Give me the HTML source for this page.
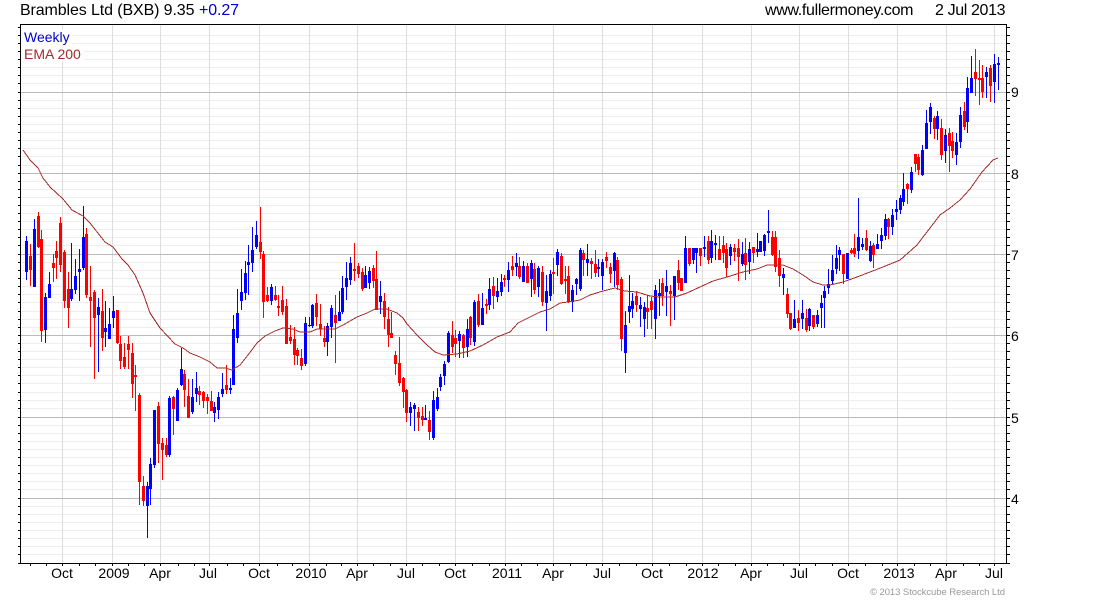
<!DOCTYPE html>
<html><head><meta charset="utf-8"><title>Brambles Ltd (BXB)</title>
<style>
html,body{margin:0;padding:0;background:#fff;width:1100px;height:600px;overflow:hidden}
svg{display:block}
text{font-family:"Liberation Sans",Arial,sans-serif;font-size:14px;fill:#000}
</style></head><body>
<svg width="1100" height="600" viewBox="0 0 1100 600" xmlns="http://www.w3.org/2000/svg">
<rect width="1100" height="600" fill="#fff"/>
<g shape-rendering="crispEdges" fill="none">
<path stroke="#eeeeee" d="M21 35.5H1006M21 43.5H1006M21 51.5H1006M21 59.5H1006M21 67.5H1006M21 75.5H1006M21 83.5H1006M21 100.5H1006M21 108.5H1006M21 116.5H1006M21 124.5H1006M21 132.5H1006M21 140.5H1006M21 148.5H1006M21 156.5H1006M21 165.5H1006M21 181.5H1006M21 189.5H1006M21 197.5H1006M21 205.5H1006M21 213.5H1006M21 221.5H1006M21 229.5H1006M21 237.5H1006M21 245.5H1006M21 262.5H1006M21 270.5H1006M21 278.5H1006M21 286.5H1006M21 294.5H1006M21 302.5H1006M21 311.5H1006M21 319.5H1006M21 327.5H1006M21 343.5H1006M21 351.5H1006M21 359.5H1006M21 367.5H1006M21 375.5H1006M21 383.5H1006M21 392.5H1006M21 400.5H1006M21 408.5H1006M21 425.5H1006M21 433.5H1006M21 441.5H1006M21 449.5H1006M21 457.5H1006M21 465.5H1006M21 473.5H1006M21 481.5H1006M21 489.5H1006M21 506.5H1006M21 514.5H1006M21 522.5H1006M21 530.5H1006M21 538.5H1006M21 546.5H1006M21 554.5H1006"/>
<path stroke="#dddddd" d="M62.5 25V563M112.5 25V563M160.5 25V563M209.5 25V563M259.5 25V563M309.5 25V563M357.5 25V563M406.5 25V563M455.5 25V563M505.5 25V563M553.5 25V563M602.5 25V563M652.5 25V563M702.5 25V563M751.5 25V563M799.5 25V563M848.5 25V563M897.5 25V563M946.5 25V563M994.5 25V563"/>
<path stroke="#bbbbbb" d="M21 92.5H1006M21 173.5H1006M21 254.5H1006M21 335.5H1006M21 417.5H1006M21 498.5H1006"/>
<path stroke="#000" d="M20.5 24.5H1006.5V563.5H20.5Z"/>
<path stroke="#000" d="M18 27.5h2M18 35.5h2M18 43.5h2M18 51.5h2M18 59.5h2M18 67.5h2M18 75.5h2M18 83.5h2M18 92.5h2M18 100.5h2M18 108.5h2M18 116.5h2M18 124.5h2M18 132.5h2M18 140.5h2M18 148.5h2M18 156.5h2M18 165.5h2M18 173.5h2M18 181.5h2M18 189.5h2M18 197.5h2M18 205.5h2M18 213.5h2M18 221.5h2M18 229.5h2M18 237.5h2M18 245.5h2M18 254.5h2M18 262.5h2M18 270.5h2M18 278.5h2M18 286.5h2M18 294.5h2M18 302.5h2M18 311.5h2M18 319.5h2M18 327.5h2M18 335.5h2M18 343.5h2M18 351.5h2M18 359.5h2M18 367.5h2M18 375.5h2M18 383.5h2M18 392.5h2M18 400.5h2M18 408.5h2M18 417.5h2M18 425.5h2M18 433.5h2M18 441.5h2M18 449.5h2M18 457.5h2M18 465.5h2M18 473.5h2M18 481.5h2M18 489.5h2M18 498.5h2M18 506.5h2M18 514.5h2M18 522.5h2M18 530.5h2M18 538.5h2M18 546.5h2M18 554.5h2M18 563.5h2"/>
<path stroke="#000" d="M1007 27.5h3M1007 35.5h3M1007 43.5h3M1007 51.5h3M1007 59.5h3M1007 67.5h3M1007 75.5h3M1007 83.5h3M1007 92.5h3M1007 100.5h3M1007 108.5h3M1007 116.5h3M1007 124.5h3M1007 132.5h3M1007 140.5h3M1007 148.5h3M1007 156.5h3M1007 165.5h3M1007 173.5h3M1007 181.5h3M1007 189.5h3M1007 197.5h3M1007 205.5h3M1007 213.5h3M1007 221.5h3M1007 229.5h3M1007 237.5h3M1007 245.5h3M1007 254.5h3M1007 262.5h3M1007 270.5h3M1007 278.5h3M1007 286.5h3M1007 294.5h3M1007 302.5h3M1007 311.5h3M1007 319.5h3M1007 327.5h3M1007 335.5h3M1007 343.5h3M1007 351.5h3M1007 359.5h3M1007 367.5h3M1007 375.5h3M1007 383.5h3M1007 392.5h3M1007 400.5h3M1007 408.5h3M1007 417.5h3M1007 425.5h3M1007 433.5h3M1007 441.5h3M1007 449.5h3M1007 457.5h3M1007 465.5h3M1007 473.5h3M1007 481.5h3M1007 489.5h3M1007 498.5h3M1007 506.5h3M1007 514.5h3M1007 522.5h3M1007 530.5h3M1007 538.5h3M1007 546.5h3M1007 554.5h3M1007 563.5h3"/>
<path stroke="#000" d="M30.5 564v2M46.5 564v2M62.5 564v2M79.5 564v2M95.5 564v2M112.5 564v2M128.5 564v2M144.5 564v2M160.5 564v2M178.5 564v2M194.5 564v2M209.5 564v2M227.5 564v2M243.5 564v2M259.5 564v2M277.5 564v2M292.5 564v2M309.5 564v2M326.5 564v2M341.5 564v2M357.5 564v2M373.5 564v2M390.5 564v2M406.5 564v2M422.5 564v2M439.5 564v2M455.5 564v2M472.5 564v2M489.5 564v2M505.5 564v2M521.5 564v2M537.5 564v2M553.5 564v2M570.5 564v2M586.5 564v2M602.5 564v2M619.5 564v2M636.5 564v2M652.5 564v2M669.5 564v2M686.5 564v2M702.5 564v2M718.5 564v2M735.5 564v2M751.5 564v2M767.5 564v2M783.5 564v2M799.5 564v2M815.5 564v2M832.5 564v2M848.5 564v2M865.5 564v2M882.5 564v2M897.5 564v2M914.5 564v2M930.5 564v2M946.5 564v2M963.5 564v2M979.5 564v2M994.5 564v2"/>
<!-- red wicks -->
<path stroke="#ff0000" stroke-width="1" d="M30.5 244V286M38.5 212V248M41.5 230V342M53.5 254V282M56.5 241V279M60.5 217V272M64.5 250V308M68.5 272V328M86.5 228V298M90.5 266V347M94.5 290V379M102.5 289V351M117.5 310V344M120.5 336V369M124.5 343V369M128.5 336V369M132.5 343V398M135.5 365V411M139.5 393V505M143.5 476V506M158.5 402V463M162.5 438V480M166.5 438V457M173.5 396V435M184.5 370V407M188.5 379V418M199.5 386V405M203.5 391V408M207.5 394V414M211.5 391V411M226.5 365V394M260.5 207V259M263.5 251V318M267.5 287V302M275.5 286V301M278.5 295V316M282.5 286V315M286.5 299V344M290.5 325V344M294.5 327V365M297.5 348V365M301.5 349V370M316.5 294V326M320.5 304V336M324.5 326V347M335.5 295V363M354.5 243V281M358.5 263V278M362.5 268V291M373.5 265V288M376.5 251V310M384.5 293V329M388.5 307V347M391.5 312V338M395.5 351V375M399.5 337V386M403.5 377V408M406.5 389V422M418.5 407V431M422.5 407V426M429.5 411V440M452.5 321V353M455.5 330V357M463.5 334V358M470.5 316V345M478.5 294V327M486.5 299V314M493.5 277V309M504.5 275V287M512.5 256V276M519.5 257V279M527.5 263V283M534.5 263V294M542.5 266V306M553.5 258V294M561.5 253V285M565.5 266V294M568.5 266V303M583.5 250V276M591.5 258V279M595.5 250V277M606.5 252V268M610.5 263V283M617.5 257V290M621.5 277V351M636.5 291V312M647.5 295V329M651.5 297V329M662.5 278V306M670.5 285V326M678.5 260V290M681.5 278V291M689.5 248V266M700.5 248V266M708.5 236V264M719.5 236V260M723.5 236V263M726.5 243V277M734.5 244V261M738.5 239V281M745.5 238V280M753.5 247V263M772.5 231V256M775.5 231V272M779.5 250V287M787.5 288V318M790.5 313V330M798.5 310V331M806.5 309V332M813.5 315V329M843.5 254V284M851.5 248V254M854.5 234V257M866.5 230V251M873.5 243V268M888.5 218V239M907.5 183V204M915.5 154V172M918.5 154V175M934.5 116V139M941.5 119V160M949.5 128V172M952.5 132V158M964.5 102V130M975.5 49V96M979.5 60V105M982.5 65V98M990.5 65V102"/>
<!-- red bodies -->
<path stroke="#ff0000" stroke-width="3" d="M30.5 256V270M38.5 216V247M41.5 239V331M53.5 263V268M56.5 251V258M60.5 223V265M64.5 252V301M68.5 289V308M86.5 234V295M90.5 297V301M94.5 292V318M102.5 311V338M117.5 310V343M120.5 344V361M124.5 357V367M128.5 344V350M132.5 353V384M135.5 375V377M139.5 395V482M143.5 486V501M158.5 406V444M162.5 443V450M166.5 445V455M173.5 397V409M184.5 374V390M188.5 396V418M199.5 391V395M203.5 392V401M207.5 397V401M211.5 401V411M226.5 385V390M260.5 242V252M263.5 254V302M267.5 295V301M275.5 295V300M278.5 306V308M282.5 300V312M286.5 306V344M290.5 337V341M294.5 339V355M297.5 350V356M301.5 358V366M316.5 303V317M320.5 324V329M324.5 338V342M335.5 315V323M354.5 269V271M358.5 266V274M362.5 272V289M373.5 268V281M376.5 279V310M384.5 301V317M388.5 319V335M391.5 333V338M395.5 355V364M399.5 363V383M403.5 378V392M406.5 390V413M418.5 412V418M422.5 416V420M429.5 420V432M452.5 335V347M455.5 338V344M463.5 335V348M470.5 317V338M478.5 301V325M486.5 304V306M493.5 286V296M504.5 278V280M512.5 266V270M519.5 266V277M527.5 266V283M534.5 269V290M542.5 272V302M553.5 272V274M561.5 256V284M565.5 279V281M568.5 276V302M583.5 253V260M591.5 261V264M595.5 264V273M606.5 257V261M610.5 267V274M617.5 260V285M621.5 279V339M636.5 296V305M647.5 308V312M651.5 301V310M662.5 283V296M670.5 291V294M678.5 270V283M681.5 278V291M689.5 248V264M700.5 248V256M708.5 241V260M719.5 249V260M723.5 245V253M726.5 249V268M734.5 248V252M738.5 248V257M745.5 253V265M753.5 247V253M772.5 237V255M775.5 237V267M779.5 258V276M787.5 294V314M790.5 313V329M798.5 318V323M806.5 318V330M813.5 315V327M843.5 254V274M851.5 250V253M854.5 248V254M866.5 238V250M873.5 245V255M888.5 219V227M907.5 184V189M915.5 154V164M918.5 157V170M934.5 118V129M941.5 128V155M949.5 133V146M952.5 141V151M964.5 111V127M975.5 72V79M979.5 78V80M982.5 78V92M990.5 68V86"/>
<!-- blue wicks -->
<path stroke="#0000ff" stroke-width="1" d="M26.5 236V280M34.5 219V287M45.5 293V343M49.5 272V298M71.5 243V301M75.5 259V294M79.5 249V301M83.5 206V270M98.5 298V372M105.5 301V347M109.5 308V339M113.5 296V328M147.5 482V538M150.5 458V505M154.5 410V468M169.5 396V457M177.5 388V421M181.5 348V386M192.5 379V414M196.5 372V402M214.5 402V422M218.5 392V419M222.5 373V397M230.5 378V394M233.5 315V385M237.5 289V343M241.5 269V310M245.5 261V300M248.5 245V295M252.5 227V272M256.5 221V249M271.5 284V305M305.5 317V366M309.5 317V327M312.5 304V328M327.5 323V356M331.5 305V338M339.5 291V321M342.5 276V314M346.5 262V300M350.5 257V285M365.5 266V288M369.5 267V289M380.5 281V314M410.5 402V426M414.5 403V431M425.5 405V420M433.5 391V440M437.5 388V411M440.5 374V391M444.5 361V385M448.5 331V363M459.5 331V358M467.5 319V357M474.5 300V346M482.5 293V325M489.5 278V310M497.5 278V302M501.5 274V296M508.5 262V292M516.5 253V276M523.5 261V282M531.5 260V297M538.5 266V297M546.5 275V331M550.5 270V301M557.5 249V276M572.5 285V312M576.5 278V295M580.5 248V291M587.5 244V276M598.5 259V277M602.5 259V290M614.5 252V287M625.5 311V373M629.5 275V323M632.5 293V318M640.5 297V327M644.5 302V337M655.5 285V339M659.5 279V316M666.5 270V316M674.5 276V320M685.5 236V283M693.5 248V264M696.5 248V273M704.5 236V257M711.5 230V263M715.5 235V260M730.5 244V265M742.5 242V266M749.5 242V274M757.5 233V257M760.5 241V252M764.5 234V256M768.5 210V243M783.5 268V295M794.5 300V328M802.5 300V329M809.5 308V331M817.5 310V327M821.5 295V328M824.5 286V328M828.5 269V294M832.5 255V284M836.5 245V274M839.5 247V271M847.5 253V279M858.5 198V259M862.5 238V250M870.5 241V262M877.5 234V249M881.5 228V249M885.5 214V240M892.5 209V235M896.5 200V220M900.5 195V214M903.5 173V206M911.5 167V193M922.5 145V176M926.5 110V149M930.5 103V134M937.5 111V140M945.5 129V163M956.5 133V165M960.5 107V148M967.5 77V133M971.5 56V93M986.5 67V98M994.5 54V103M998.5 57V90"/>
<!-- blue bodies -->
<path stroke="#0000ff" stroke-width="3" d="M26.5 241V272M34.5 229V287M45.5 297V330M49.5 284V298M71.5 289V299M75.5 276V290M79.5 269V272M83.5 237V268M98.5 307V315M105.5 328V332M109.5 324V339M113.5 311V318M147.5 486V506M150.5 464V489M154.5 410V465M169.5 398V455M177.5 390V421M181.5 369V385M192.5 397V412M196.5 388V394M214.5 407V413M218.5 397V410M222.5 389V394M230.5 388V390M233.5 329V385M237.5 313V338M241.5 292V301M245.5 273V293M248.5 262V265M252.5 250V263M256.5 235V247M271.5 287V301M305.5 323V364M309.5 325V326M312.5 305V326M327.5 326V342M331.5 308V327M339.5 312V321M342.5 288V312M346.5 278V287M350.5 263V280M365.5 275V288M369.5 271V283M380.5 296V302M410.5 407V413M414.5 405V409M425.5 418V420M433.5 400V438M437.5 397V409M440.5 377V387M444.5 364V376M448.5 333V362M459.5 334V341M467.5 329V347M474.5 302V342M482.5 308V325M489.5 289V305M497.5 291V297M501.5 282V292M508.5 270V280M516.5 263V267M523.5 266V282M531.5 263V279M538.5 268V287M546.5 291V303M550.5 274V296M557.5 252V265M572.5 290V302M576.5 279V284M580.5 250V289M587.5 259V263M598.5 267V269M602.5 262V276M614.5 253V271M625.5 325V353M629.5 306V312M632.5 301V309M640.5 305V309M644.5 307V319M655.5 290V319M659.5 293V296M666.5 286V292M674.5 276V296M685.5 248V283M693.5 248V260M696.5 248V253M704.5 247V249M711.5 241V258M715.5 243V245M730.5 247V256M742.5 254V264M749.5 249V262M757.5 249V252M760.5 241V252M764.5 235V251M768.5 231V233M783.5 274V278M794.5 319V328M802.5 313V319M809.5 309V326M817.5 315V324M821.5 303V308M824.5 291V298M828.5 284V288M832.5 270V281M836.5 258V269M839.5 250V255M847.5 253V279M858.5 237V251M862.5 244V247M870.5 246V261M877.5 244V249M881.5 235V241M885.5 219V236M892.5 215V227M896.5 209V212M900.5 198V210M903.5 189V202M911.5 172V190M922.5 150V175M926.5 123V149M930.5 107V122M937.5 116V129M945.5 135V151M956.5 142V155M960.5 115V142M967.5 88V122M971.5 78V93M986.5 72V77M994.5 64V82M998.5 63V65"/>
</g>
<polyline fill="none" stroke="#a52a2a" stroke-width="1" shape-rendering="crispEdges" points="23,150 30,160 38,168 43,178 50,187 63,199 72,210 83,216 90,223 105,242 113,247 122,259 128,265 135,275 143,293 150,313 160,328 175,344 183,348 190,353 200,357 210,362 217,368 225,368 232,370 240,365 248,355 257,343 265,336 275,331 283,328 293,329 300,332 310,332 317,329 335,329 343,325 357,317 367,313 375,309 387,309 397,313 403,318 407,324 417,335 427,345 435,352 443,355 457,354 470,351 483,345 497,337 510,332 518,323 530,317 540,312 550,309 560,303 568,302 580,300 590,295 603,291 615,288 625,291 637,292 650,296 660,297 675,297 687,293 700,287 713,281 727,277 743,272 757,269 767,265 783,265 793,269 803,275 813,282 823,285 830,285 843,282 857,277 870,272 883,267 900,260 908,253 917,245 923,237 930,228 940,215 950,208 960,200 970,189 982,172 993,160 998,158"/>
<rect x="22" y="29" width="50" height="16" fill="#fff"/>
<rect x="22" y="46" width="62" height="16" fill="#fff"/>
<text x="24" y="42" style="fill:#0000cc">Weekly</text>
<text x="24" y="59" style="fill:#a52a2a">EMA 200</text>
<text x="20" y="15" style="font-size:16px" textLength="174.5" lengthAdjust="spacing">Brambles Ltd (BXB) 9.35</text>
<text x="199" y="15" style="font-size:16px;fill:#0000cc" textLength="40" lengthAdjust="spacing">+0.27</text>
<text x="765" y="15" style="font-size:16px" textLength="148.5" lengthAdjust="spacing">www.fullermoney.com</text>
<text x="935" y="15" style="font-size:16px" textLength="70.5" lengthAdjust="spacing">2 Jul 2013</text>
<g>
<text x="1011" y="97">9</text><text x="1011" y="179">8</text><text x="1011" y="260">7</text><text x="1011" y="341">6</text><text x="1011" y="423">5</text><text x="1011" y="504">4</text>
</g>
<g text-anchor="middle">
<text x="62" y="578">Oct</text><text x="114" y="578">2009</text><text x="160" y="578">Apr</text><text x="208" y="578">Jul</text><text x="259" y="578">Oct</text><text x="311" y="578">2010</text><text x="357" y="578">Apr</text><text x="406" y="578">Jul</text><text x="455" y="578">Oct</text><text x="507" y="578">2011</text><text x="553" y="578">Apr</text><text x="602" y="578">Jul</text><text x="652" y="578">Oct</text><text x="703" y="578">2012</text><text x="751" y="578">Apr</text><text x="799" y="578">Jul</text><text x="848" y="578">Oct</text><text x="899" y="578">2013</text><text x="946" y="578">Apr</text><text x="994" y="578">Jul</text>
</g>
<text x="870" y="595" style="font-size:9.5px;fill:#999" textLength="135" lengthAdjust="spacing">© 2013 Stockcube Research Ltd</text>
</svg>
</body></html>
